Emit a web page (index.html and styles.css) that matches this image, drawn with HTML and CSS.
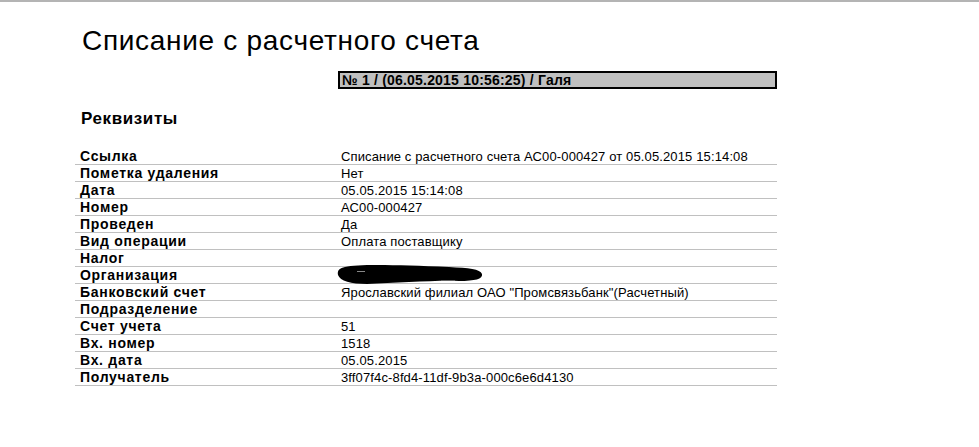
FILE: index.html
```html
<!DOCTYPE html>
<html lang="ru">
<head>
<meta charset="utf-8">
<title>Списание с расчетного счета</title>
<link rel="stylesheet" href="styles.css">
</head>
<body>
<div class="topline"></div>
<div class="page">
  <h1 class="title">Списание с расчетного счета</h1>
  <div class="stamp-row"><div class="stamp">№ 1 / (06.05.2015 10:56:25) / Галя</div></div>
  <h2 class="section">Реквизиты</h2>
  <div class="table">
    <div class="row"><div class="k">Ссылка</div><div class="v">Списание с расчетного счета АС00-000427 от 05.05.2015 15:14:08</div></div>
    <div class="row"><div class="k">Пометка удаления</div><div class="v">Нет</div></div>
    <div class="row"><div class="k">Дата</div><div class="v">05.05.2015 15:14:08</div></div>
    <div class="row"><div class="k">Номер</div><div class="v">АС00-000427</div></div>
    <div class="row"><div class="k">Проведен</div><div class="v">Да</div></div>
    <div class="row"><div class="k">Вид операции</div><div class="v">Оплата поставщику</div></div>
    <div class="row"><div class="k">Налог</div><div class="v"></div></div>
    <div class="row"><div class="k">Организация</div><div class="v redact-cell"><svg class="redact" width="146" height="22" viewBox="0 0 146 22"><path d="M8 3 C22 0 60 1 112 3 C132 4 143 5 145 10 C146 15 138 17 122 17 C100 16 60 19 30 20 C14 20 3 17 1 11 C0 6 3 4 8 3 Z" fill="#000"/><rect x="20" y="7" width="8" height="1" fill="#888"/><rect x="104" y="16" width="14" height="1" fill="#666"/></svg></div></div>
    <div class="row"><div class="k">Банковский счет</div><div class="v">Ярославский филиал ОАО "Промсвязьбанк"(Расчетный)</div></div>
    <div class="row"><div class="k">Подразделение</div><div class="v"></div></div>
    <div class="row"><div class="k">Счет учета</div><div class="v">51</div></div>
    <div class="row"><div class="k">Вх. номер</div><div class="v">1518</div></div>
    <div class="row"><div class="k">Вх. дата</div><div class="v">05.05.2015</div></div>
    <div class="row"><div class="k">Получатель</div><div class="v">3ff07f4c-8fd4-11df-9b3a-000c6e6d4130</div></div>
  </div>
</div>
</body>
</html>
```
FILE: styles.css
```css
html, body {
  margin: 0;
  padding: 0;
  background: #fff;
}
body {
  font-family: "Liberation Sans", Arial, sans-serif;
  color: #000;
}
.topline {
  height: 2px;
  background: #b4b4b4;
}
.page {
  padding-left: 75px;
  width: 702px;
}
.title {
  margin: 0;
  padding: 21px 0 0 7px;
  font-size: 28px;
  font-weight: normal;
  letter-spacing: 0.7px;
  line-height: 36px;
}
.stamp-row {
  display: flex;
  justify-content: flex-end;
  margin-top: 12px;
}
.stamp {
  width: 433px;
  height: 14px;
  border: 2px solid #000;
  background: #c0c0c0;
  font-size: 14px;
  font-weight: bold;
  letter-spacing: 0.2px;
  line-height: 14px;
  padding-left: 2px;
}
.section {
  margin: 0;
  padding: 20px 0 0 6px;
  font-size: 17px;
  font-weight: bold;
  letter-spacing: 0.6px;
  line-height: 20px;
}
.table {
  margin-top: 19px;
}
.row {
  display: grid;
  grid-template-columns: 266px 1fr;
  height: 16px;
  border-bottom: 1px solid #c0c0c0;
  font-size: 13px;
  line-height: 17px;
}
.k {
  font-weight: bold;
  font-size: 14px;
  letter-spacing: 0.7px;
  padding-left: 5px;
}
.v {
  letter-spacing: 0.13px;
}
.redact-cell {
  position: relative;
}
.redact {
  position: absolute;
  left: -4px;
  top: -3px;
}
```
